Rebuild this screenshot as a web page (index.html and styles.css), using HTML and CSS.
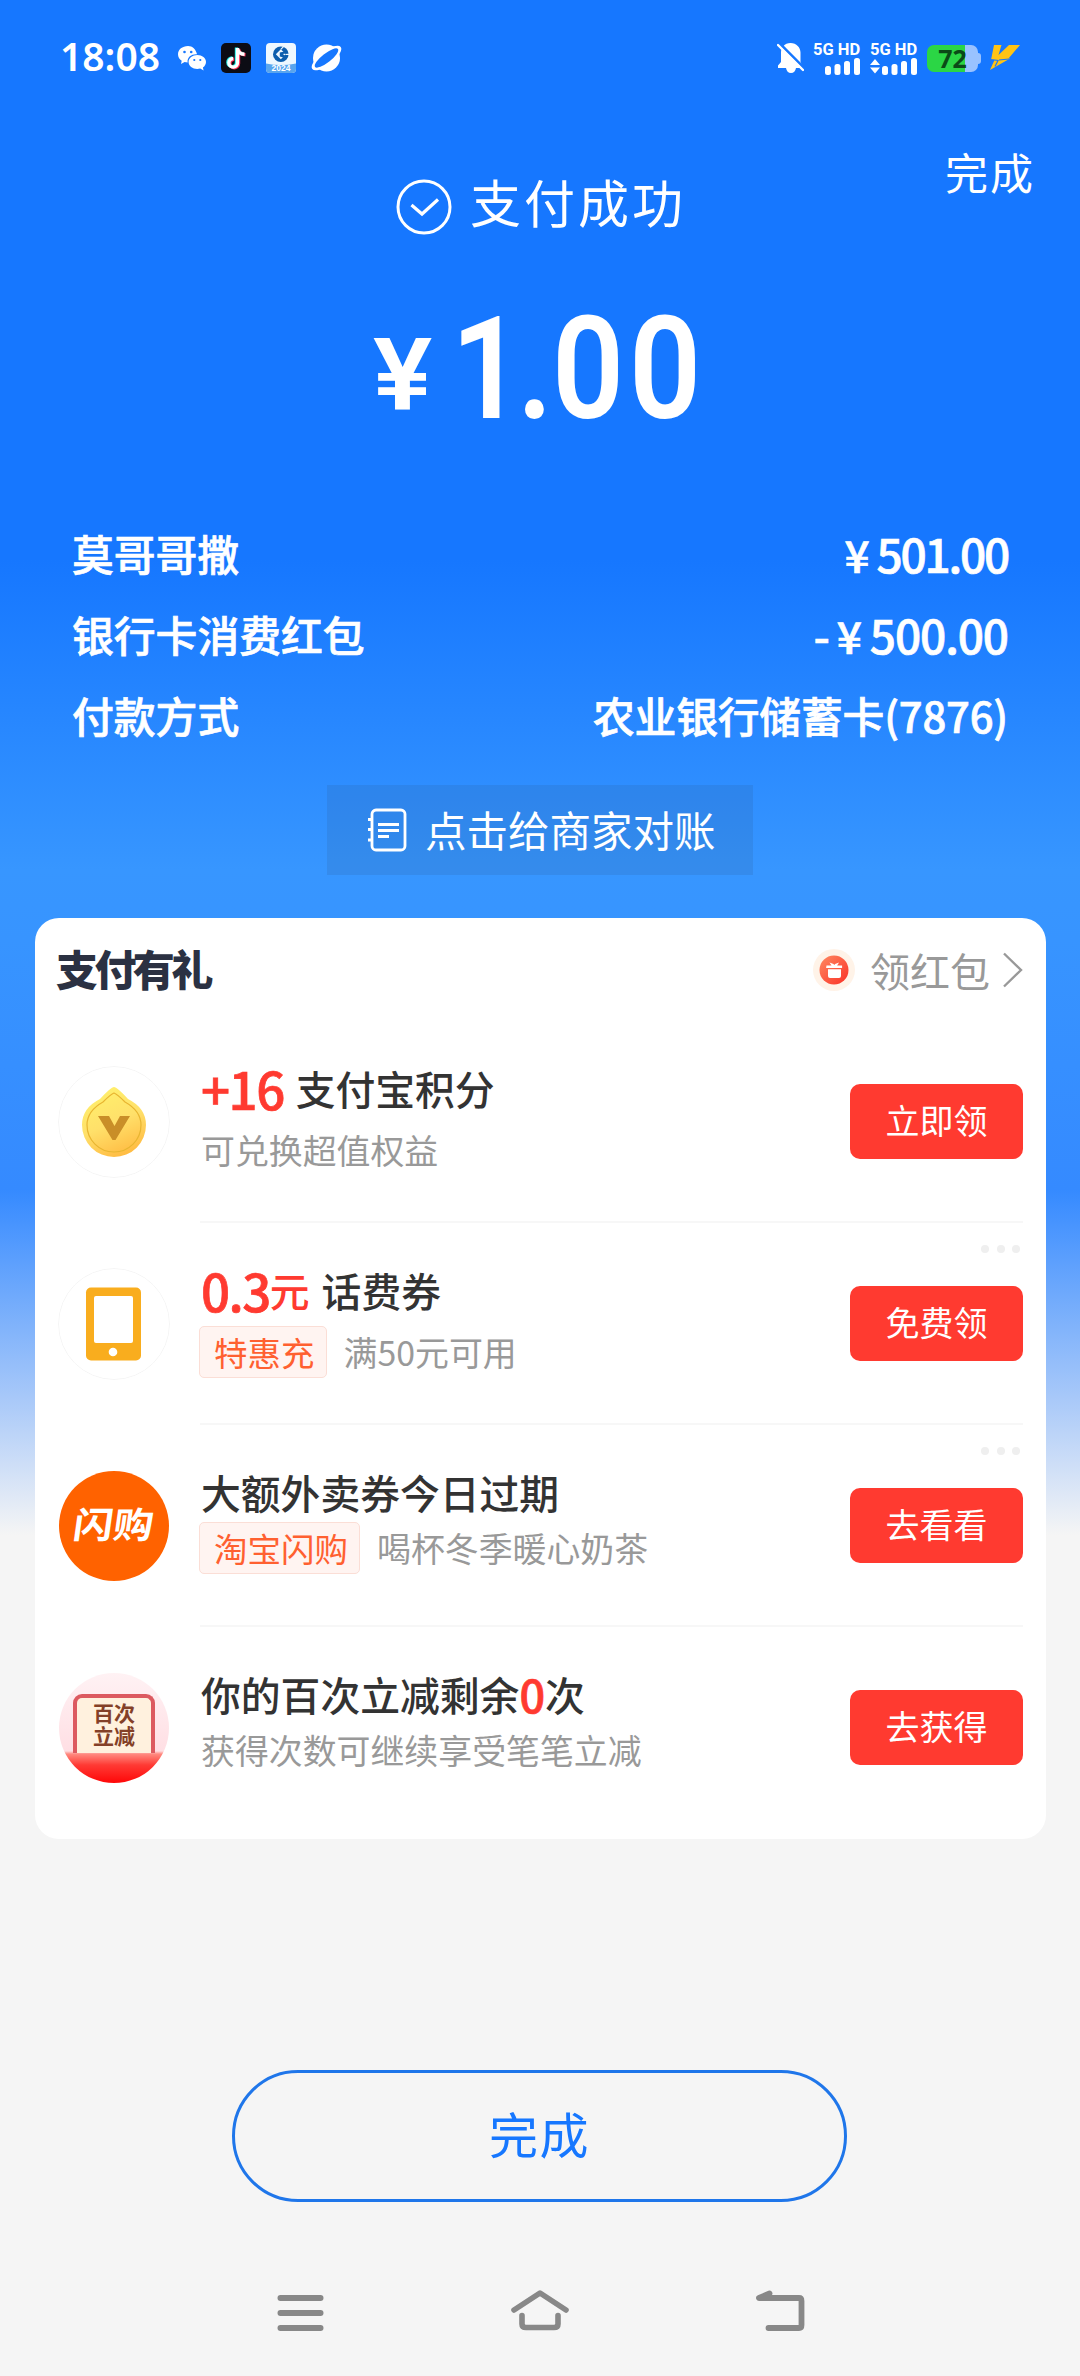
FILE: index.html
```html
<!DOCTYPE html>
<html lang="zh-CN">
<head>
<meta charset="utf-8">
<title>支付成功</title>
<link rel="stylesheet" href="styles.css">
</head>
<body>
<div class="screen">
  <header class="status">
    <span class="clock">18:08</span>
    <div class="status-apps">
      <svg width="28" height="25" viewBox="0 0 28 25"><path fill="#fff" d="M10 0C4.300 0 0 3.600 0 8.200c0 2.700 1.400 5 3.700 6.500L3 18l3.600-2c1 .3 2 .5 3 .5C9 10.500 14 7.800 19 8.200 18 3.400 14.500 0 10 0z"/><path fill="#fff" d="M28 16c0-3.900-3.900-7-8.700-7s-8.700 3.100-8.700 7 3.900 7 8.700 7c1 0 2-.2 2.900-.4L25.600 24.500l-.7-3C26.800 20.200 28 18.200 28 16z"/><g fill="#1677ff"><circle cx="6.500" cy="6" r="1.300"/><circle cx="13.200" cy="6" r="1.300"/><circle cx="16.300" cy="14" r="1.100"/><circle cx="22.300" cy="14" r="1.100"/></g></svg>
      <svg width="30" height="30" viewBox="0 0 30 30"><rect width="30" height="30" rx="5" fill="#0c0c14"/><g fill="none" stroke-width="3.400"><path stroke="#25f4ee" d="M15.500 4.500v14.800a4.300 4.300 0 1 1-4.300-4.300M15.500 5c.5 3.300 3 5.600 7 5.800"/><path stroke="#fe2c55" d="M17.500 5.800v14.800a4.300 4.300 0 1 1-4.300-4.300M17.500 6c.5 3.300 3 5.600 7 5.800"/><path stroke="#fff" d="M16.500 5v14.800a4.300 4.300 0 1 1-4.300-4.300M16.500 5.500c.5 3.300 3 5.600 7 5.800"/></g></svg>
      <svg width="30" height="30" viewBox="0 0 30 30"><rect width="30" height="30" rx="4" fill="#eef8ff"/><path d="M0 20.500q15 3 30 0V26a4 4 0 0 1-4 4H4a4 4 0 0 1-4-4z" fill="#58a5ee"/><circle cx="14.800" cy="11.300" r="7.800" fill="#0c5eae"/><path fill="#eef8ff" d="M14.800 6.300l5 5-5 5-5-5z"/><path stroke="#eef8ff" stroke-width="1.200" d="M14.800 6.300l3-3M19.800 11.300h4"/><path fill="#0c5eae" d="M13.800 9.500l7-1.500.5 2.300-4.500.7 3.500 2.500-1 1.500-5.500-1.500z"/><text x="15" y="28.300" text-anchor="middle" class="mini-year">2024</text></svg>
      <svg width="31" height="28" viewBox="0 0 31 28"><circle cx="15.500" cy="14" r="13.500" fill="#fff"/><ellipse cx="15.500" cy="14" rx="18" ry="6.800" transform="rotate(-38 15.500 14)" fill="#fff"/><ellipse cx="15.500" cy="14" rx="14.500" ry="4.500" transform="rotate(-38 15.500 14)" fill="#1677ff"/></svg>
    </div>
    <div class="status-system">
      <svg width="27" height="32" viewBox="0 0 27 32"><path fill="#fff" d="M13.500 1C7.500 1 4 5.500 4 10.500V20l-3 3.500V26h8c.5 3 2.300 5 5 5s4.500-2 5-5h6v-2.500L23.500 20v-9.500C23.500 5.500 19.500 1 13.500 1z"/><path stroke="#1677ff" stroke-width="3" d="M2 1l25 25"/><path stroke="#fff" stroke-width="2.400" stroke-linecap="round" d="M1 3l25 25"/></svg>
      <div class="sim"><span>5G HD</span><svg width="48" height="17" viewBox="0 0 48 17"><g fill="#fff"><rect x="12" y="8" width="6" height="9" rx="2.500"/><rect x="21.500" y="6" width="6" height="11" rx="2.500"/><rect x="31" y="3" width="6" height="14" rx="2.500"/><rect x="41" width="6" height="17" rx="2.500"/></g></svg></div>
      <div class="sim"><span>5G HD</span><svg width="48" height="17" viewBox="0 0 48 17"><g fill="#fff"><path d="M0 7l5-6 5 6zM0 9.500l5 6 5-6z"/><rect x="12" y="8" width="6" height="9" rx="2.500"/><rect x="21.500" y="6" width="6" height="11" rx="2.500"/><rect x="31" y="3" width="6" height="14" rx="2.500"/><rect x="41" width="6" height="17" rx="2.500"/></g></svg></div>
      <div class="battery"><span>72</span></div>
      <svg class="bolt" width="30" height="26" viewBox="0 0 30 26"><path fill="#ffc414" d="M4 0h7.500L8.500 10l10.500-10H30L18.500 13.500H20L0 25 4.500 15H1z"/><path stroke="#1677ff" stroke-width="1.200" fill="none" d="M1 14.500l7 1-3 6M9 15l10-1"/></svg>
    </div>
  </header>

  <section class="result">
    <a class="done-link">完成</a>
    <div class="success">
      <svg width="56" height="56" viewBox="0 0 56 56" fill="none" stroke="#fff"><circle cx="28" cy="28" r="26" stroke-width="3"/><path d="M15.500 26l10.500 9L42 20.500" stroke-width="3.200"/></svg>
      <span>支付成功</span>
    </div>
    <div class="amount"><span class="yen">¥</span><span class="num one">1</span><span class="num dot">.</span><span class="num">0</span><span class="num">0</span></div>
  </section>

  <dl class="details">
    <div><dt>莫哥哥撒</dt><dd class="money narrow"><span class="cny">¥</span>501.00</dd></div>
    <div><dt>银行卡消费红包</dt><dd class="money"><span class="minus">-</span><span class="cny">¥</span>500.00</dd></div>
    <div><dt>付款方式</dt><dd class="method">农业银行储蓄卡(7876)</dd></div>
  </dl>

  <div class="check-bill">
    <svg width="39" height="44" viewBox="0 0 39 44" fill="none" stroke="#fff" stroke-width="2.800"><rect x="4" y="2" width="33" height="40" rx="4"/><path d="M0 11.500h5M0 21.500h5M0 32h5M10 16.500h21M10 22.500h21M10 28.500h11"/></svg>
    <span>点击给商家对账</span>
  </div>

  <section class="card">
    <div class="card-head">
      <h2>支付有礼</h2>
      <div class="more">
        <svg width="44" height="44" viewBox="0 0 44 44"><defs><linearGradient id="gift" x1="0" y1="0" x2="1" y2="1"><stop offset="0" stop-color="#ff8a62"/><stop offset="1" stop-color="#fa3026"/></linearGradient></defs><circle cx="22" cy="22" r="21" fill="#fff3e8"/><circle cx="22" cy="22" r="14.500" fill="url(#gift)"/><path fill="#fff" d="M14.500 17.500h5l-2-3 4 1.500 .8 1 .8-1 4-1.500-2 3h5V20h-16zM16 21.300h13V28q0 2-2 2h-9q-2 0-2-2z"/></svg>
        <span>领红包</span>
        <svg width="20" height="36" viewBox="0 0 20 36" fill="none" stroke="#999" stroke-width="2.400"><path d="M1 1.500l17 16.500L1 34.500"/></svg>
      </div>
    </div>

    <article class="offer">
      <svg class="logo" width="112" height="112" viewBox="0 0 112 112"><defs><linearGradient id="gold" x1=".3" y1="0" x2=".7" y2="1"><stop offset="0" stop-color="#fff06c"/><stop offset=".5" stop-color="#ffe06a"/><stop offset="1" stop-color="#ffb940"/></linearGradient></defs><circle cx="56" cy="56" r="55.500" fill="#fff" stroke="#f5f5f5"/><path d="M56 21q3 0 14 12 18 9 18 26a32 32 0 0 1-64 0q0-17 18-26 11-12 14-12z" fill="url(#gold)"/><path d="M56 27q3 1 11 9 16 9 16 23a27 27 0 0 1-54 0q0-14 16-23 8-8 11-9z" fill="none" stroke="#e8b531" stroke-width="1.200"/><path d="M40 50h11l5.500 10L62 50h10L57.500 74h-3z" fill="#c98e28"/></svg>
      <div class="copy">
        <h3><b class="points">+16</b> 支付宝积分</h3>
        <p class="low">可兑换超值权益</p>
      </div>
      <button>立即领</button>
    </article>

    <article class="offer">
      <span class="dots"><i></i><i></i><i></i></span>
      <svg class="logo" width="112" height="112" viewBox="0 0 112 112"><circle cx="56" cy="56" r="55.500" fill="#fff" stroke="#f5f5f5"/><rect x="28" y="19.500" width="55" height="73" rx="5" fill="#f9ad1e"/><rect x="36" y="28" width="39" height="47" rx="2" fill="#fff"/><circle cx="55" cy="84" r="4.300" fill="#fff"/></svg>
      <div class="copy">
        <h3><b>0.3</b><em>元</em> 话费券</h3>
        <p class="tagged low"><span class="tag">特惠充</span>满50元可用</p>
      </div>
      <button>免费领</button>
    </article>

    <article class="offer">
      <span class="dots"><i></i><i></i><i></i></span>
      <div class="logo flash"><span>闪购</span></div>
      <div class="copy">
        <h3>大额外卖券今日过期</h3>
        <p class="tagged"><span class="tag">淘宝闪购</span>喝杯冬季暖心奶茶</p>
      </div>
      <button>去看看</button>
    </article>

    <article class="offer">
      <div class="logo hundred"><div class="ticket">百次<br>立减</div></div>
      <div class="copy">
        <h3>你的百次立减剩余<em class="zero">0</em>次</h3>
        <p>获得次数可继续享受笔笔立减</p>
      </div>
      <button>去获得</button>
    </article>
  </section>

  <button class="finish">完成</button>

  <nav class="navbar">
    <svg width="60" height="48" viewBox="0 0 60 48" fill="none" stroke="#888" stroke-width="6" stroke-linecap="round"><path d="M10.500 12h40M10.500 27h40M10.500 42h40"/></svg>
    <svg width="60" height="48" viewBox="0 0 60 48" fill="none" stroke="#888" stroke-width="5.600" stroke-linecap="round" stroke-linejoin="round"><path d="M4 24L30 7 56 24M12 29.500V38q0 3.500 4 3.500h28q4 0 4-3.500v-8.500"/></svg>
    <svg width="60" height="48" viewBox="0 0 60 48" fill="none" stroke="#888" stroke-width="5.800" stroke-linecap="round" stroke-linejoin="round"><path d="M19.500 7.500L9 12H49q2.500 0 2.500 3v24q0 3-2.500 3H18.500"/></svg>
  </nav>
</div>
</body>
</html>
```
FILE: styles.css
```css
* { box-sizing: border-box; margin: 0; padding: 0; }

body {
  width: 1080px;
  height: 2376px;
  overflow: hidden;
  background: #f5f5f5;
  font-family: "Noto Sans CJK SC", sans-serif;
  color: #333;
}

.screen {
  display: flex;
  flex-direction: column;
  height: 2376px;
  background: linear-gradient(180deg, #1677ff 0, #1677ff 560px, #3796ff 870px, #3794ff 940px, #358aff 1190px, #a9c9f9 1400px, #f5f5f5 1535px);
}

svg { display: block; flex: none; }
button { border: 0; font-family: inherit; }

/* status bar */
.status {
  display: flex;
  align-items: center;
  height: 116px;
  padding: 0 60px;
  color: #fff;
}
.clock {
  width: 118px;
  margin-bottom: 4px;
  font: 600 39px/40px "Noto Sans", sans-serif;
}
.status-apps { display: flex; align-items: center; gap: 15px; }
.mini-year { font: 700 8.500px "Liberation Sans", sans-serif; fill: #fff; }
.status-system { display: flex; align-items: center; margin-left: auto; }
.sim { display: flex; flex-direction: column; width: 48px; margin-left: 9px; }
.sim span {
  font: 700 16.500px/17px Roboto, sans-serif;
  white-space: nowrap;
}
.battery {
  position: relative;
  width: 51px;
  height: 27px;
  margin-left: 9px;
  border-radius: 7px;
  background: linear-gradient(90deg, #2bd645 38px, #99c2ff 38px);
  color: #0b4a17;
  text-align: center;
  font: 700 25px/27px "Noto Sans", sans-serif;
}
.battery::after {
  content: "";
  position: absolute;
  left: 51px;
  top: 8px;
  width: 3px;
  height: 11px;
  border-radius: 0 3px 3px 0;
  background: #99c2ff;
}
.bolt { margin-left: 12px; }

/* result */
.result { position: relative; height: 402px; }
.done-link {
  position: absolute;
  right: 45px;
  top: 23px;
  font-size: 43px;
  line-height: 64px;
  letter-spacing: 2px;
  color: #fff;
}
.success {
  display: flex;
  align-items: center;
  gap: 18px;
  height: 129px;
  padding: 53px 0 0 396px;
  color: #fff;
  font-size: 51px;
  letter-spacing: 3px;
}
.success span { margin-bottom: 13px; }
.amount {
  display: flex;
  align-items: baseline;
  height: 150px;
  margin-top: 40px;
  padding-left: 373px;
  color: #fff;
  font: 600 142px/170px Roboto, sans-serif;
}
.yen {
  width: 78px;
  margin-bottom: 9px;
  font-size: 101px;
  transform: translateY(-9px) scaleX(1.1);
  transform-origin: left;
}
.num { width: 77px; transform: scaleX(.89); transform-origin: left; }
.num.one { width: 66px; }
.num.dot { width: 35px; }

/* payment details */
.details {
  height: 267px;
  padding: 0 72px;
  color: #fff;
  font-weight: 500;
  -webkit-text-stroke: .7px #fff;
}
.details div {
  display: flex;
  justify-content: space-between;
  height: 81px;
  font-size: 41.800px;
  line-height: 70px;
}
.money { font-size: 46px; letter-spacing: -1.100px; }
.narrow { letter-spacing: -2.200px; }
.money .cny { margin-right: 9px; font-size: 44px; }
.minus { margin-right: 8px; }
.method { letter-spacing: -.2px; }

.check-bill {
  display: flex;
  align-items: center;
  align-self: center;
  gap: 18px;
  width: 426px;
  height: 90px;
  padding-left: 41px;
  background: rgba(40, 80, 120, .14);
  color: #fff;
  font-size: 41.500px;
}
.check-bill span { margin-bottom: 3px; }

/* rewards card */
.card {
  width: 1011px;
  height: 921px;
  margin: 43px 0 0 35px;
  padding: 0 23px;
  border-radius: 24px;
  background: #fff;
}
.card-head { display: flex; justify-content: space-between; height: 103px; }
.card-head h2 {
  margin-left: -2px;
  font-size: 42px;
  font-weight: 900;
  line-height: 99px;
  letter-spacing: -3.600px;
  color: #2b3142;
}
.more { display: flex; align-items: center; height: 103px; font-size: 40px; color: #999; }
.more span { margin: 1px 13px 0 14px; }

.offer { position: relative; display: flex; height: 202px; }
.offer .logo { flex: none; width: 112px; height: 112px; margin-top: 45px; border-radius: 50%; }
.copy { flex: 1; margin-left: 31px; }
.offer:not(:last-child)::after {
  content: "";
  position: absolute;
  left: 142px;
  right: 0;
  bottom: 0;
  height: 2px;
  background: #f7f7f7;
}
.copy h3 {
  display: flex;
  align-items: center;
  height: 62px;
  margin-top: 36px;
  font-size: 39.800px;
  font-weight: 500;
  line-height: 62px;
  white-space: pre;
}
.copy b {
  font-size: 51px;
  font-weight: 500;
  letter-spacing: -1.500px;
  color: #ff3a30;
  -webkit-text-stroke: .7px #ff3a30;
}
.copy .points { margin-right: 3px; }
.copy em { font-style: normal; color: #ff3a30; }
.copy b + em { margin-right: 3px; }
.copy .zero { font-size: 45px; -webkit-text-stroke: .7px #ff3a30; }
.copy p { height: 52px; margin-top: -1px; font-size: 33.900px; line-height: 52px; color: #999; }
.copy .low { margin-top: 5px; }
.tagged { display: flex; gap: 17px; margin-left: -2px; }
.tag {
  padding: 0 11px 0 14px;
  border: 1px solid #fbded6;
  border-radius: 5px;
  background: #fff4f1;
  font-size: 33.500px;
  line-height: 50px;
  color: #ff6030;
}
.offer button {
  width: 173px;
  height: 75px;
  margin-top: 63px;
  padding-bottom: 4px;
  border-radius: 10px;
  background: #ff3a30;
  color: #fff;
  font-size: 34px;
}
.dots { position: absolute; right: 3px; top: 22px; display: flex; gap: 7.500px; }
.dots i { width: 8px; height: 8px; border-radius: 50%; background: #efefef; }

.offer .flash, .offer .hundred { width: 110px; height: 110px; margin: 46px 1px 0; }
.flash {
  display: grid;
  place-items: center;
  background: #ff6200;
  color: #fff;
  font-size: 40px;
  font-weight: 700;
}
.flash span { transform: translateY(-3px) skewX(-8deg) scaleY(.9); }
.hundred {
  display: flex;
  justify-content: center;
  overflow: hidden;
  padding-top: 21px;
  background: linear-gradient(180deg, #fff2f4 0, #ffdfe4 78px, #ff8a80 81px, #ff3a34 92px, #ff0c0c 108px);
}
.ticket {
  width: 82px;
  height: 59px;
  padding-top: 3px;
  border: 4px solid #dc5a60;
  border-bottom: 0;
  border-radius: 9px 9px 0 0;
  background: #fff1de;
  color: #844028;
  text-align: center;
  font-size: 21px;
  font-weight: 700;
  line-height: 23px;
}

.finish {
  width: 615px;
  height: 132px;
  margin: 231px 0 0 232px;
  padding-bottom: 8px;
  border: 3px solid #1f76ea;
  border-radius: 66px;
  background: transparent;
  color: #1677ff;
  font-size: 49px;
  letter-spacing: 1.500px;
}

.navbar { display: flex; gap: 180px; padding: 84px 0 0 270px; }
```
